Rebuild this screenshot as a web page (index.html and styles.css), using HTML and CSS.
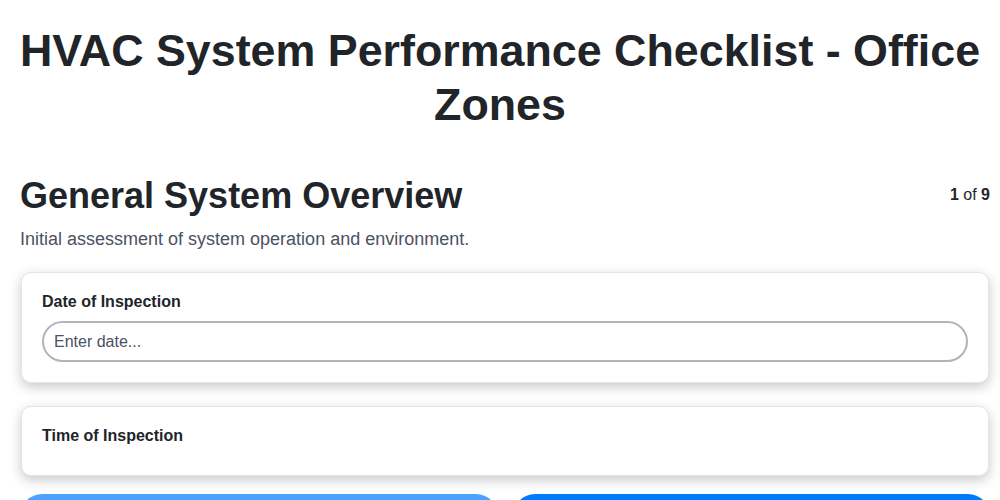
FILE: index.html
```html
<!DOCTYPE html>
<html lang="en">
<head>
<meta charset="utf-8">
<title>HVAC System Performance Checklist - Office Zones</title>
<link rel="stylesheet" href="styles.css">
</head>
<body>
<div class="page">
  <h1 class="title">HVAC System Performance Checklist - Office Zones</h1>
  <section class="step">
    <div class="step-head">
      <h2 class="step-title">General System Overview</h2>
      <div class="step-count"><b>1</b> of <b>9</b></div>
    </div>
    <p class="step-desc">Initial assessment of system operation and environment.</p>
    <div class="card">
      <label class="field-label" for="date">Date of Inspection</label>
      <input class="field-input" id="date" type="text" placeholder="Enter date...">
    </div>
    <div class="card card-short">
      <label class="field-label">Time of Inspection</label>
    </div>
    <div class="nav">
      <button class="btn btn-prev" type="button">Previous</button>
      <button class="btn btn-next" type="button">Next</button>
    </div>
  </section>
</div>
</body>
</html>
```
FILE: styles.css
```css
* { box-sizing: border-box; }
html, body { margin: 0; padding: 0; background: #ffffff; }
body {
  font-family: "Liberation Sans", Arial, sans-serif;
  color: #212529;
}
.page {
  padding: 0 10px;
}
.title {
  margin: 24px 0 0;
  font-size: 44.8px;
  line-height: 1.2;
  font-weight: 700;
  text-align: center;
  color: #212529;
}
.step {
  padding-left: 10px;
  margin-top: 42px;
}
.step-head {
  display: flex;
  align-items: center;
  justify-content: space-between;
}
.step-title {
  margin: 0;
  font-size: 36px;
  line-height: 1.2;
  font-weight: 700;
  color: #212529;
}
.step-count {
  font-size: 16px;
  color: #212529;
}
.step-desc {
  margin: 12px 0 22px;
  font-size: 18px;
  line-height: 1.2;
  color: #4a5263;
}
.card {
  background: #ffffff;
  border: 1px solid #e4e4ea;
  border-radius: 10px;
  padding: 19px 20px 20px;
  box-shadow: 0 4px 12px rgba(30, 30, 50, 0.24);
  margin: 0 1px 23px;
}
.card-short {
  padding-bottom: 30px;
  margin-bottom: 18px;
}
.field-label {
  display: block;
  font-size: 16px;
  line-height: 19px;
  font-weight: 700;
  margin-bottom: 10px;
  color: #212529;
}
.card-short .field-label { margin-bottom: 0; }
.field-input {
  display: block;
  width: 100%;
  height: 41px;
  padding: 0 10px;
  font-family: "Liberation Sans", Arial, sans-serif;
  font-size: 16px;
  color: #212529;
  background: #ffffff;
  border: 2px solid #adb5bd;
  border-radius: 21px;
  outline: none;
}
.field-input::placeholder { color: #4a5263; opacity: 1; }
.nav {
  display: flex;
  gap: 15px;
}
.btn {
  flex: 1;
  height: 44px;
  border: none;
  border-radius: 22px;
  color: #ffffff;
  font-family: "Liberation Sans", Arial, sans-serif;
  font-size: 16px;
  font-weight: 700;
}
.btn-prev { background: #007bff; opacity: 0.7; }
.btn-next { background: #007bff; }
```
